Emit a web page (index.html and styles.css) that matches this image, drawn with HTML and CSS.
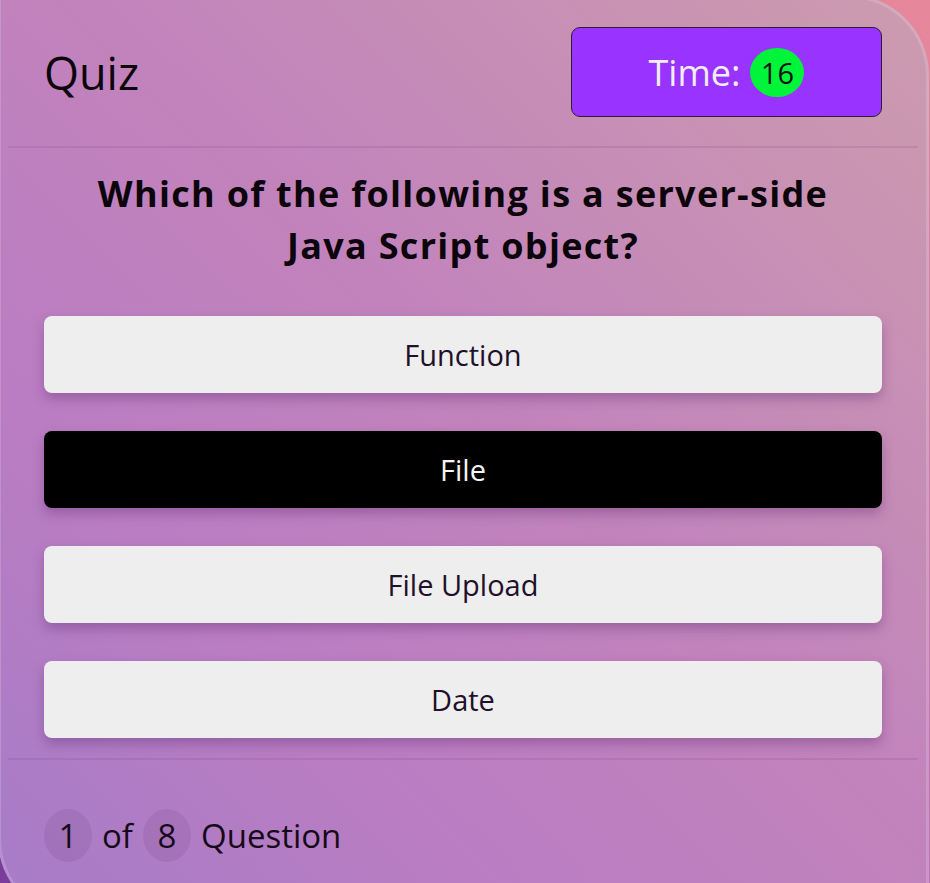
FILE: index.html
```html
<!DOCTYPE html>
<html lang="en">
<head>
<meta charset="utf-8">
<title>Quiz</title>
<link rel="stylesheet" href="styles.css">
</head>
<body>
<div class="card">
  <header class="header">
    <h1 class="title">Quiz</h1>
    <div class="timer">Time: <span class="timer-count">16</span></div>
  </header>
  <main class="body">
    <h2 class="question">Which of the following is a server-side Java Script object?</h2>
    <div class="options">
      <button class="option">Function</button>
      <button class="option option-selected">File</button>
      <button class="option">File Upload</button>
      <button class="option">Date</button>
    </div>
  </main>
  <footer class="footer">
    <span class="num">1</span> of <span class="num">8</span> Question
  </footer>
</div>
</body>
</html>
```
FILE: styles.css
```css
html, body {
  margin: 0;
  padding: 0;
  height: 100%;
  overflow: hidden;
}
body {
  background: linear-gradient(to bottom left, #e8879a 0%, #c070b8 50%, #7a3c9c 100%);
  font-family: "Open Sans", "Liberation Sans", sans-serif;
  color: #1a0c1c;
}
.card {
  box-sizing: border-box;
  margin: -5px 0 0 -2px;
  width: 931px;
  height: 924px;
  padding: 0 11px 0 10px;
  border-radius: 0 80px 0 80px;
  background: linear-gradient(to top right, #a67cc8 0%, #bb7dc2 30%, #c283bc 55%, #cc9cae 100%);
  box-shadow: inset 0 0 0 3px rgba(255, 255, 255, 0.16);
}
.header {
  display: flex;
  align-items: center;
  justify-content: space-between;
  padding: 32px 36px 29px;
  border-bottom: 2px solid rgba(110, 50, 120, 0.14);
}
.title {
  margin: 0;
  font-size: 45px;
  font-weight: 400;
  color: #0c060c;
}
.timer {
  box-sizing: border-box;
  width: 311px;
  height: 90px;
  display: flex;
  align-items: center;
  justify-content: center;
  gap: 10px;
  background: #9933ff;
  border: 1px solid #2e1e34;
  border-radius: 9px;
  color: #f1eef4;
  font-size: 36px;
}
.timer-count {
  display: inline-flex;
  align-items: center;
  justify-content: center;
  width: 54px;
  height: 49px;
  border-radius: 50%;
  background: #00f53a;
  color: #111;
  font-size: 29px;
}
.body {
  padding: 20px 36px 0;
}
.question {
  margin: 0 auto;
  max-width: 760px;
  text-align: center;
  font-size: 36px;
  font-weight: 700;
  letter-spacing: 1.3px;
  line-height: 52px;
  color: #0c060c;
}
.options {
  display: flex;
  flex-direction: column;
  gap: 38px;
  margin-top: 44px;
  padding-bottom: 20px;
  border-bottom: 2px solid rgba(110, 50, 120, 0.14);
  margin-left: -36px;
  margin-right: -36px;
  padding-left: 36px;
  padding-right: 36px;
}
.option {
  height: 77px;
  border: none;
  border-radius: 8px;
  background: #eeeeee;
  color: #22102a;
  font-family: "Open Sans", "Liberation Sans", sans-serif;
  font-size: 29px;
  box-shadow: 0 6px 12px rgba(90, 40, 110, 0.35);
  cursor: pointer;
}
.option-selected {
  background: #000;
  color: #f4f4f4;
}
.footer {
  display: flex;
  align-items: center;
  gap: 10px;
  padding: 49px 36px 0;
  font-size: 33px;
  color: #160a18;
}
.num {
  display: inline-block;
  width: 48px;
  height: 53px;
  line-height: 53px;
  text-align: center;
  border-radius: 50%;
  background: rgba(100, 50, 110, 0.13);
}
```
